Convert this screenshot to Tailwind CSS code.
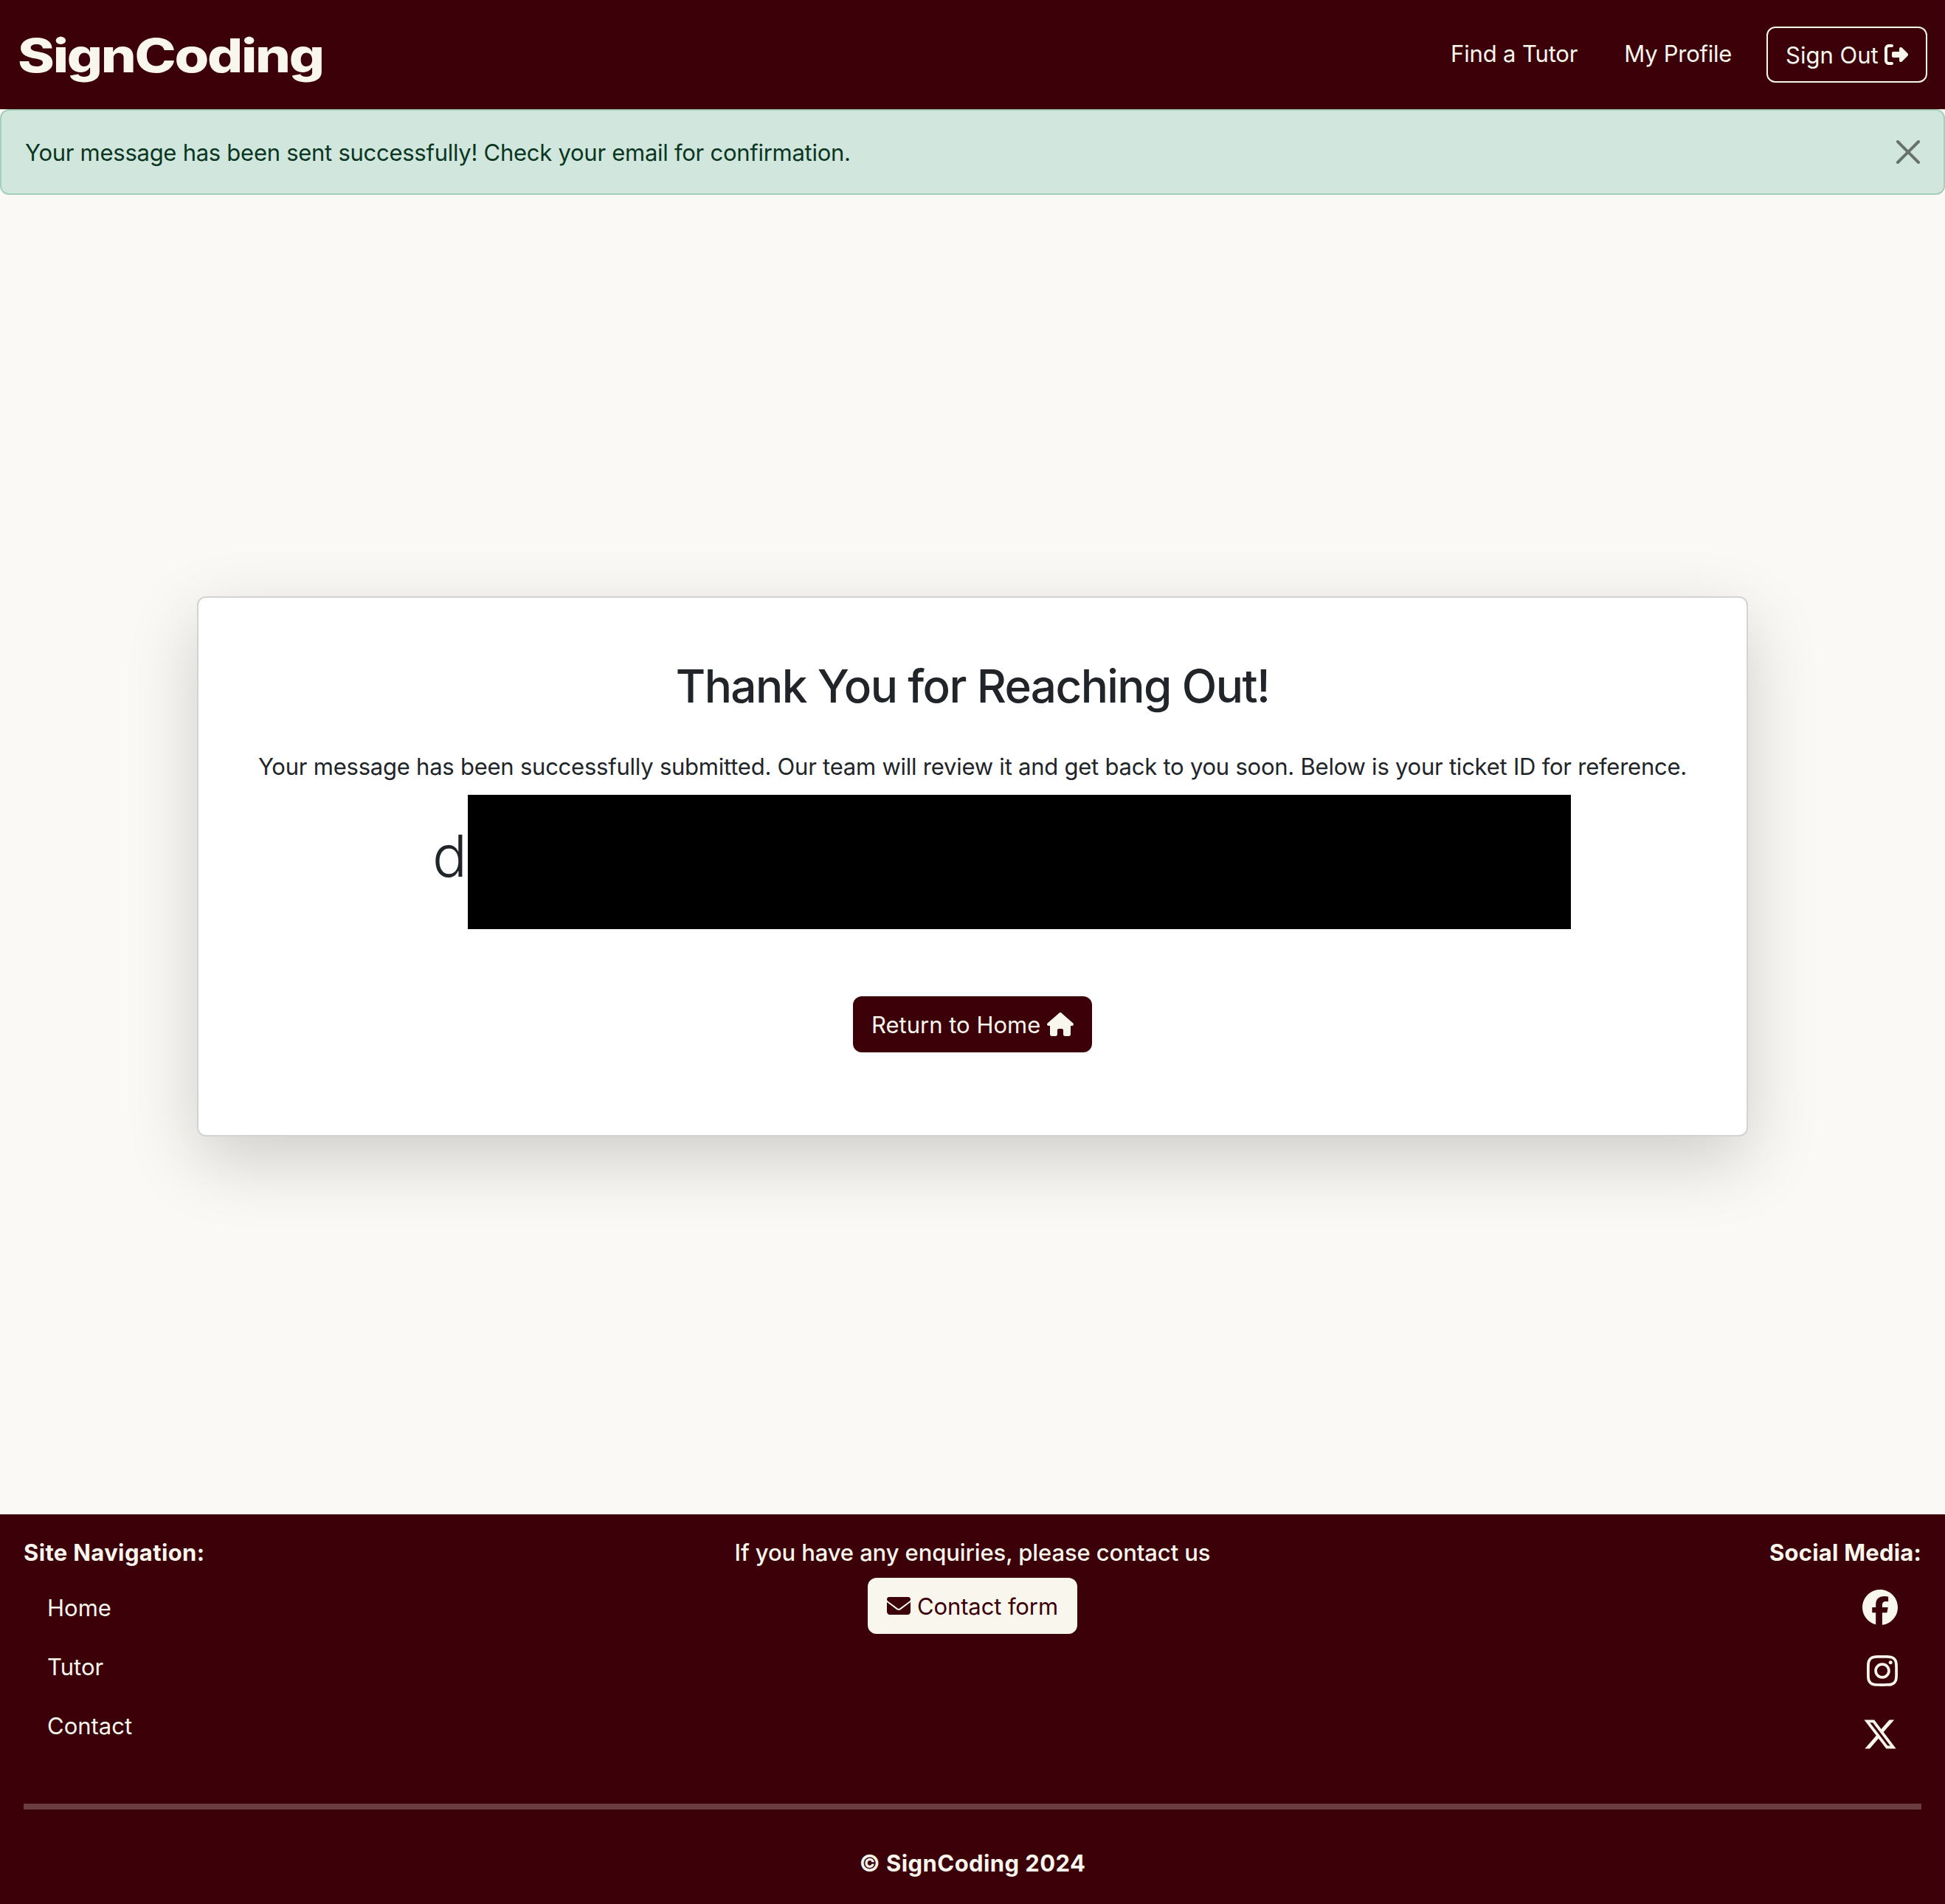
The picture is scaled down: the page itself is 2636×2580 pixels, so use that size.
<!DOCTYPE html>
<html lang="en">
<head>
<meta charset="utf-8">
<title>SignCoding</title>
<script src="https://cdn.jsdelivr.net/npm/@tailwindcss/browser@4"></script>
</head>
<body class="flex h-[2580px] w-[2636px] flex-col overflow-hidden bg-[#faf9f5] font-['Inter',sans-serif] text-[31px] leading-[48px] whitespace-nowrap text-[#212529]">
  <header class="flex h-[148px] shrink-0 items-center justify-between bg-[#3b0008] px-6 text-[#f9f6ed]">
    <a class="origin-left scale-x-120 pt-0.5 text-[63px] leading-[96px] font-extrabold tracking-[-1.9px]">SignCoding</a>
    <nav class="flex items-center">
      <a class="mr-[63px] -mt-0.5 tracking-[-0.15px]">Find a Tutor</a>
      <a class="mr-[47px] -mt-0.5 tracking-[-0.27px]">My Profile</a>
      <a class="flex h-[76px] w-[218px] items-center justify-between rounded-xl border-2 border-[#f9f6ed] px-6">
        <span class="pt-0.5">Sign Out</span>
        <svg class="size-8" viewBox="0 0 512 512" fill="currentColor"><path d="M377.9 105.9L500.7 228.7c7.2 7.2 11.3 17.1 11.3 27.3s-4.1 20.1-11.3 27.3L377.9 406.1c-6.4 6.4-15 9.9-24 9.9c-18.7 0-33.9-15.2-33.9-33.9l0-62.1-128 0c-17.7 0-32-14.3-32-32l0-64c0-17.7 14.3-32 32-32l128 0 0-62.1c0-18.7 15.2-33.9 33.9-33.9c9 0 17.6 3.6 24 9.9zM160 96L96 96c-17.7 0-32 14.3-32 32l0 256c0 17.7 14.3 32 32 32l64 0c17.7 0 32 14.3 32 32s-14.3 32-32 32l-64 0c-53 0-96-43-96-96L0 128C0 75 43 32 96 32l64 0c17.7 0 32 14.3 32 32s-14.3 32-32 32z"/></svg>
      </a>
    </nav>
  </header>

  <div class="flex h-[116px] shrink-0 items-center justify-between rounded-xl border-2 border-[#a3cfbb] bg-[#d1e7dd] px-8 text-[#0a3622]">
    <p class="pt-0.5 tracking-[-0.27px]">Your message has been sent successfully! Check your email for confirmation.</p>
    <svg class="size-8 text-black opacity-50" viewBox="0 0 16 16" fill="currentColor"><path d="M.293.293a1 1 0 0 1 1.414 0L8 6.586 14.293.293a1 1 0 1 1 1.414 1.414L9.414 8l6.293 6.293a1 1 0 0 1-1.414 1.414L8 9.414l-6.293 6.293a1 1 0 0 1-1.414-1.414L6.586 8 .293 1.707a1 1 0 0 1 0-1.414z"/></svg>
  </div>

  <main class="flex flex-1 items-center justify-center pt-8">
    <section class="flex h-[732px] w-[2102px] flex-col items-center rounded-xl border-2 border-[#d2d3d4] bg-white pt-[81px] shadow-[0_32px_96px_rgba(0,0,0,0.175)]">
      <h1 class="text-[62px] leading-[77px] font-medium tracking-[-1.6px]">Thank You for Reaching Out!</h1>
      <p class="mt-[47px] tracking-[-0.234px]">Your message has been successfully submitted. Our team will review it and get back to you soon. Below is your ticket ID for reference.</p>
      <div class="mt-[14px] flex h-[182px] gap-[2px] self-start pl-[317px]">
        <span class="w-[46px] pt-[35px] text-[78px] leading-[96px] font-light">d</span>
        <div class="w-[1495px] bg-black"></div>
      </div>
      <a class="mt-[91px] flex h-[76px] w-[324px] items-center justify-between rounded-xl bg-[#3b0008] pr-[25px] pl-[25px] text-[#f9f6ed]">
        <span class="pt-0.5">Return to Home</span>
        <svg class="h-8 w-9" viewBox="0 0 576 512" fill="currentColor"><path d="M575.8 255.5c0 18-15 32.1-32 32.1l-32 0 .7 160.2c0 2.7-.2 5.4-.5 8.1l0 16.2c0 22.1-17.9 40-40 40l-16 0c-1.1 0-2.2 0-3.3-.1c-1.4 .1-2.8 .1-4.2 .1L416 512l-24 0c-22.1 0-40-17.9-40-40l0-24 0-64c0-17.7-14.3-32-32-32l-64 0c-17.7 0-32 14.3-32 32l0 64 0 24c0 22.1-17.9 40-40 40l-24 0-31.9 0c-1.5 0-3-.1-4.5-.2c-1.2 .1-2.4 .2-3.6 .2l-16 0c-22.1 0-40-17.9-40-40l0-112c0-.9 0-1.9 .1-2.8l0-69.7-32 0c-18 0-32-14-32-32.1c0-9 3-17 10-24L266.4 8c7-7 15-8 22-8s15 2 21 7L564.8 231.5c8 7 12 15 11 24z"/></svg>
      </a>
    </section>
  </main>

  <footer class="h-[528px] shrink-0 bg-[#3b0008] px-8 pt-7 text-[#f9f6ed]">
    <div class="grid h-[364px] grid-cols-3">
      <div>
        <h2 class="font-bold tracking-[0.36px]">Site Navigation:</h2>
        <ul class="mt-[27px] flex flex-col gap-8 pl-8">
          <li>Home</li>
          <li>Tutor</li>
          <li>Contact</li>
        </ul>
      </div>
      <div class="flex flex-col items-center">
        <p class="font-medium tracking-[-0.107px]">If you have any enquiries, please contact us</p>
        <a class="mt-[10px] flex h-[76px] w-[284px] items-center justify-between rounded-xl bg-[#f9f6ed] px-[26px] text-[#3b0008]">
          <svg class="size-8" viewBox="0 0 512 512" fill="currentColor"><path d="M48 64C21.5 64 0 85.5 0 112c0 15.1 7.1 29.3 19.2 38.4L236.8 313.6c11.4 8.5 27 8.5 38.4 0L492.8 150.4c12.1-9.1 19.2-23.3 19.2-38.4c0-26.5-21.5-48-48-48L48 64zM0 176L0 384c0 35.3 28.7 64 64 64l384 0c35.3 0 64-28.7 64-64l0-208L294.4 339.2c-22.8 17.1-54 17.1-76.8 0L0 176z"/></svg>
          <span class="pt-0.5 tracking-[-0.1px]">Contact form</span>
        </a>
      </div>
      <div class="flex flex-col items-end">
        <h2 class="font-bold tracking-[0.2px]">Social Media:</h2>
        <div class="mt-[26px] flex flex-col items-end gap-[38px] pr-8">
          <svg class="size-12" viewBox="0 0 512 512" fill="currentColor"><path d="M512 256C512 114.6 397.4 0 256 0S0 114.6 0 256C0 376 82.7 476.8 194.2 504.5V334.2H141.4V256h52.8V222.3c0-87.1 39.4-127.5 125-127.5c16.2 0 44.2 3.2 55.7 6.4V172c-6-.6-16.5-1-29.6-1c-42 0-58.2 15.9-58.2 57.2V256h83.6l-14.4 78.2H287V510.1C413.8 494.8 512 386.9 512 256h0z"/></svg>
          <svg class="h-12 w-[42px]" viewBox="0 0 448 512" fill="currentColor"><path d="M224.1 141c-63.6 0-114.9 51.3-114.9 114.9s51.3 114.9 114.9 114.9S339 319.5 339 255.9 287.7 141 224.1 141zm0 189.6c-41.1 0-74.7-33.5-74.7-74.7s33.5-74.7 74.7-74.7 74.7 33.5 74.7 74.7-33.6 74.7-74.7 74.7zm146.4-194.3c0 14.9-12 26.8-26.8 26.8-14.9 0-26.8-12-26.8-26.8s12-26.8 26.8-26.8 26.8 12 26.8 26.8zm76.1 27.2c-1.7-35.9-9.9-67.7-36.2-93.9-26.2-26.2-58-34.4-93.9-36.2-37-2.1-147.9-2.1-184.9 0-35.8 1.7-67.6 9.9-93.9 36.1s-34.4 58-36.2 93.9c-2.1 37-2.1 147.9 0 184.9 1.7 35.9 9.9 67.7 36.2 93.9s58 34.4 93.9 36.2c37 2.1 147.9 2.1 184.9 0 35.9-1.7 67.7-9.9 93.9-36.2 26.2-26.2 34.4-58 36.2-93.9 2.1-37 2.1-147.8 0-184.8zM398.8 388c-7.8 19.6-22.9 34.7-42.6 42.6-29.5 11.7-99.5 9-132.1 9s-102.7 2.6-132.1-9c-19.6-7.8-34.7-22.9-42.6-42.6-11.7-29.5-9-99.5-9-132.1s-2.6-102.7 9-132.1c7.8-19.6 22.9-34.7 42.6-42.6 29.5-11.7 99.5-9 132.1-9s102.7-2.6 132.1 9c19.6 7.8 34.7 22.9 42.6 42.6 11.7 29.5 9 99.5 9 132.1s2.7 102.7-9 132.1z"/></svg>
          <svg class="size-12" viewBox="0 0 512 512" fill="currentColor"><path d="M389.2 48h70.6L305.6 224.2 487 464H345L233.7 318.6 106.5 464H35.8L200.7 275.5 26.8 48H172.4L272.9 180.9 389.2 48zM364.4 421.8h39.1L151.1 88h-42L364.4 421.8z"/></svg>
        </div>
      </div>
    </div>
    <hr class="h-2 border-0 bg-[#f9f6ed]/25">
    <p class="mt-[49px] text-center font-bold tracking-[0.416px]">© SignCoding 2024</p>
  </footer>
</body>
</html>
